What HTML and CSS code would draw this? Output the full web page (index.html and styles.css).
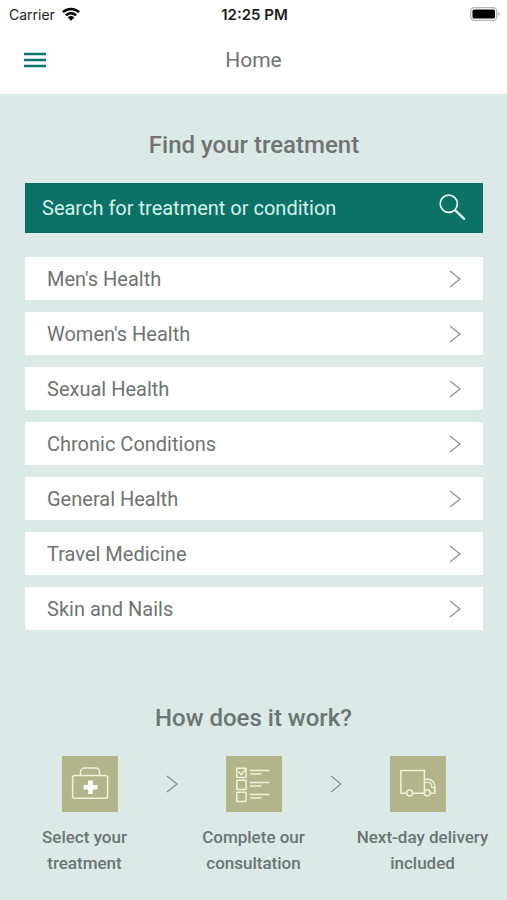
FILE: index.html
```html
<!DOCTYPE html>
<html lang="en">
<head>
<meta charset="utf-8">
<meta name="viewport" content="width=device-width, initial-scale=1">
<title>Home</title>
<link rel="stylesheet" href="styles.css">
</head>
<body>
<svg class="symbols" aria-hidden="true">
  <symbol id="chevron" viewBox="0 0 12 18"><path d="M1 1l10 8-10 8" fill="none" stroke="currentColor" stroke-width="1.2"/></symbol>
</svg>
<div class="status">
  <div class="carrier">
    <span>Carrier</span>
    <svg width="18" height="14" viewBox="0 0 18 14" aria-hidden="true">
      <g fill="none" stroke="#000" stroke-width="2.5"><path d="M.9 5.2a11.6 11.6 0 0 1 16.200 0"/><path d="M3.900 8.300a7.300 7.300 0 0 1 10.200 0"/></g>
      <path d="M9 13.800L5.700 10.400a4.800 4.800 0 0 1 6.600 0z"/>
    </svg>
  </div>
  <time class="clock">12:25 PM</time>
  <svg class="battery" width="30" height="14" viewBox="0 0 30 14" aria-hidden="true">
    <rect x=".7" y=".7" width="26" height="12.600" rx="3.500" fill="#fff" stroke="#b4b4b4" stroke-width="1.300"/>
    <rect x="2.500" y="2.500" width="22.500" height="9" rx="1.500"/>
    <path d="M28.300 4.800c2 .8 2 3.600 0 4.400z" fill="#b4b4b4"/>
  </svg>
</div>
<header class="topbar">
  <button class="menu" type="button" aria-label="Menu">
    <svg width="22" height="16" viewBox="0 0 22 16"><path d="M0 2h22M0 8h22M0 14h22" stroke="#12776b" stroke-width="2.400"/></svg>
  </button>
  <h1 class="title">Home</h1>
</header>
<main class="main">
  <section class="find">
    <h2 class="heading">Find your treatment</h2>
    <form class="search">
      <input class="search-input" type="text" aria-label="Search for treatment or condition" placeholder="Search for treatment or condition">
      <button class="search-button" type="submit" aria-label="Search">
        <svg width="28" height="28" viewBox="0 0 28 28" fill="none" stroke="#e6f7f4"><circle cx="9.800" cy="9.800" r="8.600" stroke-width="1.700"/><path d="M16 16.200l9.800 9.300" stroke-width="2.400"/></svg>
      </button>
    </form>
    <nav class="categories" aria-label="Treatments">
      <a class="category" href="#mens">Men's Health<svg class="chevron"><use href="#chevron"/></svg></a>
      <a class="category" href="#womens">Women's Health<svg class="chevron"><use href="#chevron"/></svg></a>
      <a class="category" href="#sexual">Sexual Health<svg class="chevron"><use href="#chevron"/></svg></a>
      <a class="category" href="#chronic">Chronic Conditions<svg class="chevron"><use href="#chevron"/></svg></a>
      <a class="category" href="#general">General Health<svg class="chevron"><use href="#chevron"/></svg></a>
      <a class="category" href="#travel">Travel Medicine<svg class="chevron"><use href="#chevron"/></svg></a>
      <a class="category" href="#skin">Skin and Nails<svg class="chevron"><use href="#chevron"/></svg></a>
    </nav>
  </section>
  <section class="how">
    <h2 class="heading">How does it work?</h2>
    <div class="icons" aria-hidden="true">
      <svg class="tile" viewBox="0 0 56 56" fill="none" stroke="#f1f2d9" stroke-width="1.500">
        <rect x="10.600" y="19.600" width="35" height="22.600" rx="2"/>
        <path d="M18.500 19.500v-3.500a4 4 0 0 1 4-4h11a4 4 0 0 1 4 4v3.500"/>
        <path d="M26.200 24.500h4.600v4.500h4.500v4.600h-4.500v4.500h-4.600v-4.500h-4.500v-4.600h4.500z" fill="#fff" stroke="none"/>
      </svg>
      <svg class="chevron step-chevron"><use href="#chevron"/></svg>
      <svg class="tile" viewBox="0 0 56 56" fill="none" stroke="#f1f2d9" stroke-width="1.500">
        <rect x="10.800" y="12.300" width="9.200" height="9.200" rx=".5"/>
        <rect x="10.800" y="24.300" width="9.200" height="9.200" rx=".5"/>
        <rect x="10.800" y="36.300" width="9.200" height="9.200" rx=".5"/>
        <path d="M12.500 15.500l2.700 3 5.300-6.200"/>
        <path d="M24 14.500h19.500M24 18h11.500M24 26.500h19.500M24 30h11.500M24 38.500h19.500M24 42h11.500" stroke-width="1.300"/>
      </svg>
      <svg class="chevron step-chevron"><use href="#chevron"/></svg>
      <svg class="tile" viewBox="0 0 56 56" fill="none" stroke="#f1f2d9" stroke-width="1.500">
        <path d="M16.500 37.300h-5.600V14.500h23.500v22.800M22.800 37.300h11.200M40.300 37.300h4.500v-6.500c0-4.600-3.200-7.500-7-7.500h-3.400"/>
        <path d="M35 26.200h2c3.200 0 4.800 2 4.800 5.300h3" stroke-width="1.200"/>
        <circle cx="19.600" cy="37" r="3"/><circle cx="37.200" cy="37" r="3"/>
      </svg>
    </div>
    <ol class="captions">
      <li>Select your treatment</li>
      <li>Complete our consultation</li>
      <li>Next-day delivery included</li>
    </ol>
  </section>
</main>
</body>
</html>
```
FILE: styles.css
```css
* {
  box-sizing: border-box;
}

body {
  margin: 0;
  min-height: 100vh;
  display: flex;
  flex-direction: column;
  background: #fff;
  color: #707372;
  font-family: Roboto, sans-serif;
}

button {
  border: 0;
  padding: 0;
  background: none;
  cursor: pointer;
}

svg {
  display: block;
}

.symbols {
  display: none;
}

.status {
  display: grid;
  grid-template-columns: 1fr auto 1fr;
  align-items: center;
  height: 28px;
  padding: 0 7px 0 9px;
  color: #1c1c1c;
  font-family: Inter, sans-serif;
  font-size: 14px;
}

.carrier {
  display: flex;
  align-items: center;
  gap: 7px;
}

.clock {
  font-size: 15px;
  font-weight: 600;
}

.battery {
  justify-self: end;
}

.topbar {
  display: grid;
  grid-template-columns: 1fr auto 1fr;
  align-items: center;
  height: 66px;
  padding: 0 24px 2px;
}

.menu {
  justify-self: start;
}

.title {
  margin: 0;
  font-size: 21px;
  font-weight: 400;
  line-height: 24px;
}

.main {
  flex: 1;
  padding-top: 36px;
  background: #dbe9e7;
}

.find {
  padding: 0 24px 0 25px;
}

.heading {
  margin: 0;
  font-size: 24px;
  font-weight: 500;
  line-height: 30px;
  text-align: center;
}

.search {
  display: flex;
  height: 50px;
  margin: 23px 0 24px;
  background: #0c7167;
}

.search-input {
  flex: 1;
  min-width: 0;
  border: 0;
  padding: 0 0 0 17px;
  background: none;
  color: #d5f1ec;
  font: 400 20px Roboto, sans-serif;
}

.search-input::placeholder {
  color: #d5f1ec;
  opacity: 1;
}

.search-button {
  padding: 0 16px;
}

.categories {
  display: grid;
  gap: 12px;
}

.category {
  display: flex;
  align-items: center;
  justify-content: space-between;
  height: 43px;
  padding: 0 22px;
  background: #fff;
  color: inherit;
  font-size: 20px;
  text-decoration: none;
}

.chevron {
  width: 12px;
  height: 18px;
  color: #8b8f8e;
}

.how {
  padding: 73px 0 24px;
  color: #6b7573;
}

.icons {
  display: grid;
  grid-template-columns: repeat(5, 82px);
  justify-content: center;
  place-items: center;
  margin-top: 23px;
}

.tile {
  width: 56px;
  height: 56px;
  background: #b1b589;
}

.step-chevron {
  color: #7f8b88;
}

.captions {
  display: grid;
  grid-template-columns: repeat(3, 1fr);
  margin: 12px 0 0;
  padding: 0;
  list-style: none;
  font-size: 17px;
  font-weight: 500;
  line-height: 26px;
  text-align: center;
}

.captions li {
  padding: 0 16px;
}
```
